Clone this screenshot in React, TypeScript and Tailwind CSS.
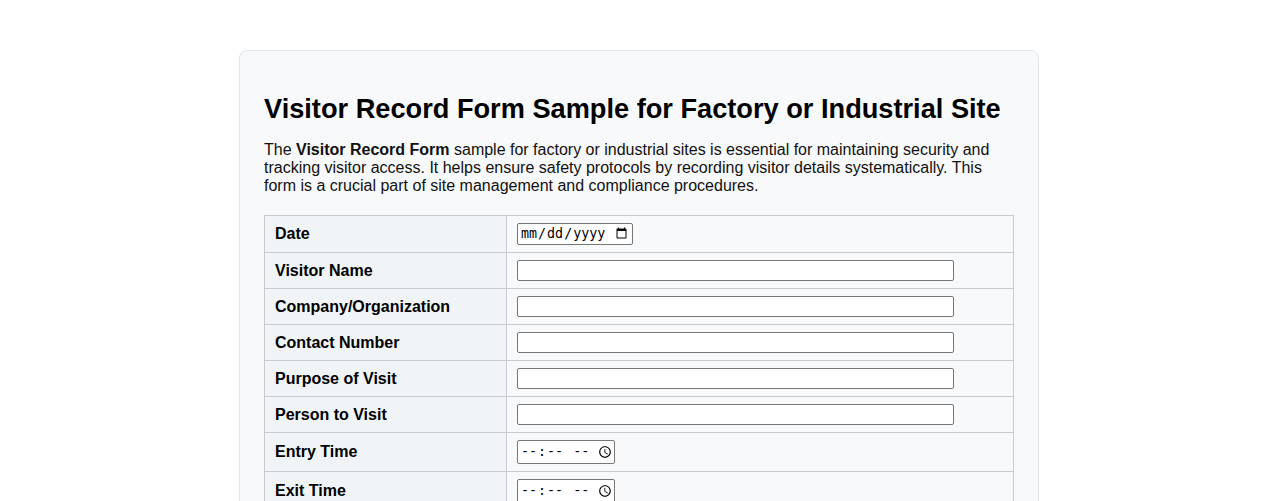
import React from "react";

const textRows = [
  "Visitor Name",
  "Company/Organization",
  "Contact Number",
  "Purpose of Visit",
  "Person to Visit",
];

function Label({ children }: { children: React.ReactNode }) {
  return (
    <td className="w-[242px] border border-[#c8ccd0] bg-[#f1f4f7] px-[10px] py-[7px] align-middle text-[16px] leading-[18px] font-bold text-black">
      {children}
    </td>
  );
}

function Cell({ children }: { children: React.ReactNode }) {
  return (
    <td className="border border-[#c8ccd0] bg-[#f8f9fa] px-[10px] py-[7px] align-middle leading-[18px]">
      {children}
    </td>
  );
}

const inputBase =
  "block rounded-[2px] border border-[#767676] bg-white px-[2px] text-[13.333px] text-black";

const timeInput = `${inputBase} h-[24px] w-[98px] font-['DejaVu_Sans_Mono',monospace] text-[11px] [&::-webkit-calendar-picker-indicator]:ml-0 [&::-webkit-calendar-picker-indicator]:p-0`;

export default function App() {
  return (
    <div className="min-h-screen bg-white [font-family:'Liberation_Sans',Arial,sans-serif]">
      <div className="mx-auto mt-[50px] w-[800px] rounded-lg border border-[#e3e5e8] bg-[#f8f9fa] px-6 pb-6 pt-[42px]">
        <h1 className="text-[27.2px] font-bold leading-[32px] text-black">
          Visitor Record Form Sample for Factory or Industrial Site
        </h1>
        <p className="mt-[16px] text-[16px] leading-[18px] text-[#111]">
          The <b>Visitor Record Form</b> sample for factory or industrial sites is essential for maintaining
          security and tracking visitor access. It helps ensure safety protocols by recording visitor
          details systematically. This form is a crucial part of site management and compliance
          procedures.
        </p>
        <table className="mt-[20px] w-full border-collapse">
          <tbody>
            <tr>
              <Label>Date</Label>
              <Cell>
                <input type="date" className={`${inputBase} h-[22px] w-[116px] font-['DejaVu_Sans_Mono',monospace] text-[12px]`} />
              </Cell>
            </tr>
            {textRows.map((r) => (
              <tr key={r}>
                <Label>{r}</Label>
                <Cell>
                  <input type="text" className={`${inputBase} h-[21px] w-[90%]`} />
                </Cell>
              </tr>
            ))}
            <tr>
              <Label>Entry Time</Label>
              <Cell>
                <input type="time" className={timeInput} />
              </Cell>
            </tr>
            <tr>
              <Label>Exit Time</Label>
              <Cell>
                <input type="time" className={timeInput} />
              </Cell>
            </tr>
            <tr>
              <Label>Visitor Signature</Label>
              <Cell>
                <input type="text" className={`${inputBase} h-[21px] w-[90%]`} />
              </Cell>
            </tr>
          </tbody>
        </table>
      </div>
    </div>
  );
}
